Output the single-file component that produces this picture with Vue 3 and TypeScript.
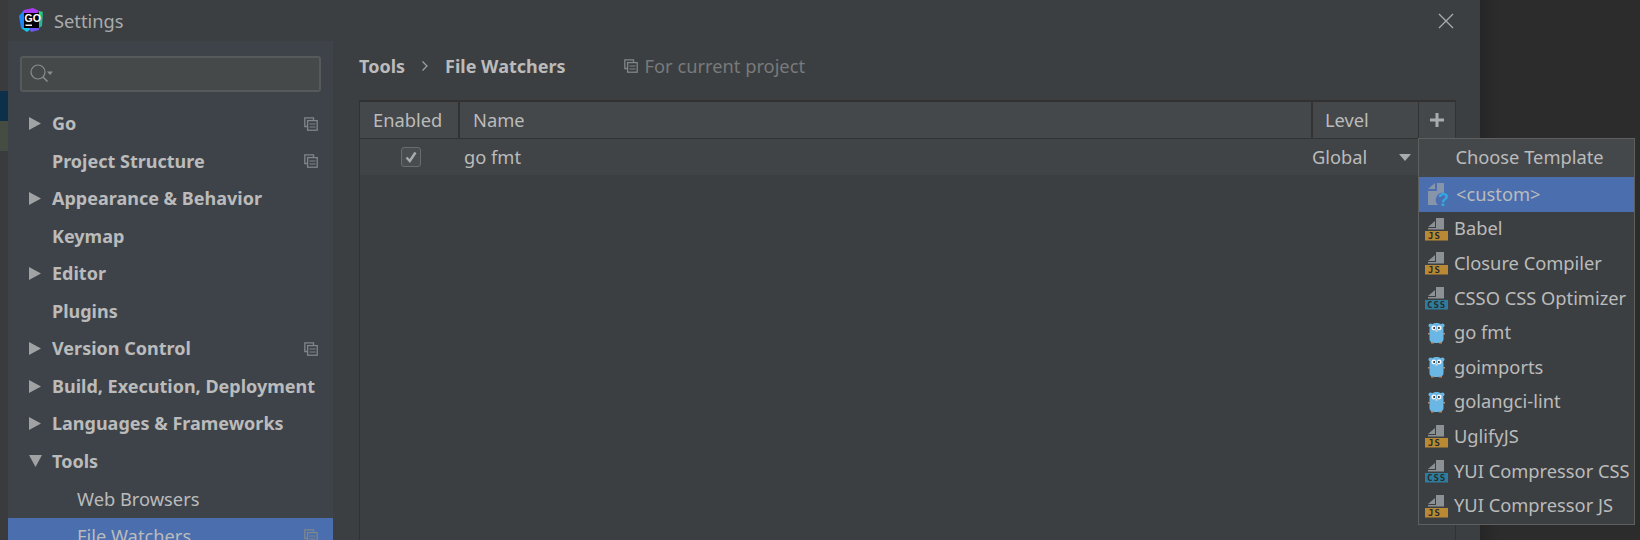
<template>
  <div class="screen">
    <div class="left-strip">
      <div class="strip-blue"></div>
      <div class="strip-olive"></div>
    </div>

    <div class="window">
      <div class="titlebar">
        <svg class="go-logo" width="24" height="24" viewBox="0 0 24 24">
          <polygon points="5,2 14,0 20,3 15,8 5,8" fill="#a63df0" />
          <polygon points="5,2 0,8 2,20 5,20 5,6" fill="#1f86f2" />
          <polygon points="20,3 24,4 20,14" fill="#27d07a" />
          <polygon points="20,12 24,5 23,18 20,20" fill="#27b5a0" />
          <polygon points="2,20 8,24 13,20" fill="#18c5e8" />
          <polygon points="10,20 20,20 20,22 12,24" fill="#6a58f0" />
          <rect x="5" y="5" width="15" height="15" fill="#000" />
          <rect x="6.5" y="16.5" width="6.5" height="1.5" fill="#eee" />
          <text x="5.6" y="14" class="go-logo-text">GO</text>
        </svg>
        <span class="title">Settings</span>
        <svg class="close" width="16" height="16" viewBox="0 0 16 16">
          <path d="M1 1 L15 15 M15 1 L1 15" stroke="#a9abac" stroke-width="1.3" fill="none" />
        </svg>
      </div>

      <div class="body">
        <aside class="sidebar">
          <div class="search">
            <svg width="24" height="22" viewBox="0 0 24 22">
              <circle cx="8" cy="9" r="7" fill="none" stroke="#8a8d8e" stroke-width="1.2" />
              <path d="M13 14 L17.5 18.5" stroke="#8a8d8e" stroke-width="1.6" />
              <polygon points="17,8.5 23,8.5 20,12" fill="#8a8d8e" />
            </svg>
          </div>
          <ul class="tree">
            <li v-for="item in tree" :key="item.label" :class="['tree-row', { selected: item.selected, child: item.child }]">
              <span class="arrow">
                <svg v-if="item.arrow === 'right'" width="12" height="13" viewBox="0 0 12 13"><polygon points="0,0 12,6.5 0,13" fill="#a0a2a3" /></svg>
                <svg v-else-if="item.arrow === 'down'" width="13" height="12" viewBox="0 0 13 12"><polygon points="0,0 13,0 6.5,12" fill="#a0a2a3" /></svg>
              </span>
              <span :class="['tree-label', { bold: !item.child }]">{{ item.label }}</span>
              <svg v-if="item.copy" class="copy-icon" width="14" height="14" viewBox="0 0 14 14">
                <path d="M3.5 9.5H.8V.8H9.5V3.5" fill="none" stroke="#7f8689" stroke-width="1.3" />
                <rect x="3.6" y="3.6" width="9.6" height="9.6" fill="none" stroke="#7f8689" stroke-width="1.3" />
                <path d="M5.5 7h6M5.5 10h6" stroke="#7f8689" stroke-width="1.2" />
              </svg>
            </li>
          </ul>
        </aside>

        <main class="main">
          <div class="crumbs">
            <span class="crumb">Tools</span>
            <svg class="crumb-sep" width="8" height="12" viewBox="0 0 8 12"><path d="M1.5 1.5 L6 6 L1.5 10.5" fill="none" stroke="#a0a2a3" stroke-width="1.2" /></svg>
            <span class="crumb">File Watchers</span>
            <svg class="project-icon" width="14" height="14" viewBox="0 0 14 14">
              <path d="M3.5 9.5H.8V.8H9.5V3.5" fill="none" stroke="#7f8689" stroke-width="1.3" />
              <rect x="3.6" y="3.6" width="9.6" height="9.6" fill="none" stroke="#7f8689" stroke-width="1.3" />
              <path d="M5.5 7h6M5.5 10h6" stroke="#7f8689" stroke-width="1.2" />
            </svg>
            <span class="project-text">For current project</span>
          </div>

          <div class="table">
            <div class="thead">
              <div class="th th-enabled">Enabled</div>
              <div class="th th-name">Name</div>
              <div class="th th-level">Level</div>
              <div class="th th-add">
                <svg width="16" height="16" viewBox="0 0 16 16"><path d="M8 1V15M1 8H15" stroke="#a9abac" stroke-width="3" /></svg>
              </div>
            </div>
            <div class="tr">
              <div class="td-check">
                <span class="checkbox">
                  <svg width="14" height="14" viewBox="0 0 14 14"><path d="M2.5 7.5 L5.8 11 L11.5 2.5" fill="none" stroke="#a8aaab" stroke-width="2.5" /></svg>
                </span>
              </div>
              <div class="td-name">go fmt</div>
              <div class="td-level">Global</div>
              <svg class="level-arrow" width="12" height="7" viewBox="0 0 12 7"><polygon points="0,0 12,0 6,7" fill="#a9abac" /></svg>
            </div>
          </div>
        </main>
      </div>
    </div>

    <div class="outside"></div>

    <div class="popup">
      <div class="popup-title">Choose Template</div>
      <div class="popup-row popup-custom">
        <svg class="custom-icon" width="22" height="28" viewBox="0 0 22 28">
          <path d="M0 9 L7 3 V9 Z" fill="#8795ab" />
          <path d="M9 3 H16 V13 A7 7 0 0 0 10 25 H0 V11 H9 Z" fill="#8795ab" />
          <text x="10" y="26" class="question">?</text>
        </svg>
        <span>&lt;custom&gt;</span>
      </div>
      <div v-for="t in templates" :key="t.label" class="popup-row">
        <svg v-if="t.icon === 'go'" class="row-icon" width="24" height="24" viewBox="0 0 24 24">
          <circle cx="5.5" cy="4.5" r="2" fill="#6ab7e6" />
          <circle cx="17.5" cy="4.5" r="2" fill="#6ab7e6" />
          <path d="M4.5 9 C4.5 4 7.5 2 11.5 2 C15.5 2 18.5 4 18.5 9 V18 C18.5 21 16 22 11.5 22 C7 22 4.5 21 4.5 18 Z" fill="#6ab7e6" />
          <rect x="3" y="12" width="2" height="1.5" fill="#b98a6a" />
          <rect x="18" y="12" width="2" height="1.5" fill="#b98a6a" />
          <rect x="6" y="21" width="3" height="1.5" fill="#b98a6a" />
          <rect x="14" y="21" width="3" height="1.5" fill="#b98a6a" />
          <circle cx="8.8" cy="7" r="2.4" fill="#f4f6f7" />
          <circle cx="14.2" cy="7" r="2.4" fill="#f4f6f7" />
          <circle cx="9.1" cy="7" r="1" fill="#222" />
          <circle cx="13.9" cy="7" r="1" fill="#222" />
          <rect x="10.5" y="9" width="2" height="1.6" fill="#e8d8c0" />
        </svg>
        <svg v-else class="row-icon" width="24" height="24" viewBox="0 0 24 24">
          <path d="M3 10 L10 4 V10 Z" fill="#8b9194" />
          <path d="M11 1 H19 V12.5 H3 V11 H11 Z" fill="#8b9194" />
          <rect x="0" y="14" width="23" height="9.5" :fill="t.icon === 'js' ? '#b98a33' : '#2e7d9e'" />
          <text :x="t.icon === 'js' ? 3 : 2" y="22" class="badge">{{ t.icon.toUpperCase() }}</text>
        </svg>
        <span>{{ t.label }}</span>
      </div>
    </div>
  </div>
</template>

<script setup lang="ts">
type TreeItem = {
  label: string;
  arrow?: 'right' | 'down';
  copy?: boolean;
  child?: boolean;
  selected?: boolean;
};
type Template = { label: string; icon: 'js' | 'css' | 'go' };

const tree: TreeItem[] = [
  { label: 'Go', arrow: 'right', copy: true },
  { label: 'Project Structure', copy: true },
  { label: 'Appearance & Behavior', arrow: 'right' },
  { label: 'Keymap' },
  { label: 'Editor', arrow: 'right' },
  { label: 'Plugins' },
  { label: 'Version Control', arrow: 'right', copy: true },
  { label: 'Build, Execution, Deployment', arrow: 'right' },
  { label: 'Languages & Frameworks', arrow: 'right' },
  { label: 'Tools', arrow: 'down' },
  { label: 'Web Browsers', child: true },
  { label: 'File Watchers', child: true, selected: true, copy: true }
];

const templates: Template[] = [
  { label: 'Babel', icon: 'js' },
  { label: 'Closure Compiler', icon: 'js' },
  { label: 'CSSO CSS Optimizer', icon: 'css' },
  { label: 'go fmt', icon: 'go' },
  { label: 'goimports', icon: 'go' },
  { label: 'golangci-lint', icon: 'go' },
  { label: 'UglifyJS', icon: 'js' },
  { label: 'YUI Compressor CSS', icon: 'css' },
  { label: 'YUI Compressor JS', icon: 'js' }
];
</script>

<style>
html, body {
  margin: 0;
  background: #2b2b2b;
}
</style>

<style scoped>
.screen {
  position: relative;
  display: flex;
  width: 1640px;
  height: 540px;
  overflow: hidden;
  font-family: "Noto Sans", sans-serif;
  font-size: 18.3px;
  color: #bbbbbb;
  background: #2b2b2b;
}

.left-strip {
  width: 8px;
  flex: none;
  background: #393b3c;
  padding-top: 91px;
  box-sizing: border-box;
}
.strip-blue {
  height: 30px;
  background: #0d2f4a;
}
.strip-olive {
  height: 30px;
  background: #454c42;
}

.window {
  width: 1472px;
  flex: none;
  display: flex;
  flex-direction: column;
  background: #3c3f41;
}
.outside {
  flex: 1;
  background: linear-gradient(to right, #262626, #2c2c2c 20px);
}

.titlebar {
  height: 41px;
  flex: none;
  display: flex;
  align-items: center;
  padding-left: 11px;
  padding-right: 26px;
  box-sizing: border-box;
}
.go-logo {
  margin-top: -1px;
}
.go-logo-text {
  font-family: "Liberation Sans", sans-serif;
  font-size: 10.5px;
  font-weight: 700;
  fill: #fff;
}
.title {
  margin-left: 11px;
  color: #a9abac;
}
.close {
  margin-left: auto;
}

.body {
  flex: 1;
  display: flex;
  min-height: 0;
}

.sidebar {
  width: 325px;
  flex: none;
  background: #3e434a;
  padding-top: 15px;
  box-sizing: border-box;
}
.search {
  height: 36px;
  margin: 0 12px;
  width: 301px;
  box-sizing: border-box;
  border: 2px solid #565a5b;
  border-radius: 3px;
  background: #45494a;
  display: flex;
  align-items: center;
  padding-left: 8px;
}
.tree {
  list-style: none;
  margin: 13px 0 0;
  padding: 0;
}
.tree-row {
  height: 37.5px;
  display: flex;
  align-items: center;
  white-space: nowrap;
}
.tree-row.selected {
  background: #4b6eaf;
}
.arrow {
  width: 21px;
  margin-left: 21px;
  margin-right: 2px;
  display: flex;
  flex: none;
}
.tree-row.child .arrow {
  width: 46px;
}
.tree-label {
  padding-bottom: 1px;
}
.tree-label.bold {
  font-weight: 700;
  font-size: 18px;
}
.copy-icon {
  margin-left: auto;
  margin-right: 15px;
  flex: none;
}

.main {
  flex: 1;
  display: flex;
  flex-direction: column;
  padding: 0 24px 0 26px;
  min-width: 0;
}
.crumbs {
  height: 50px;
  margin-bottom: 9px;
  flex: none;
  display: flex;
  align-items: center;
  white-space: nowrap;
}
.crumb {
  font-weight: 700;
  font-size: 18px;
}
.crumb-sep {
  margin: 0 16px;
}
.project-icon {
  margin-left: 58px;
}
.project-text {
  margin-left: 7px;
  padding-bottom: 2px;
  color: #787a7c;
}

.table {
  flex: 1;
  border: 1px solid #323232;
  border-bottom: none;
  border-width: 2px 1px 0;
}
.thead {
  height: 36px;
  display: flex;
  background: #45484a;
  border-bottom: 1px solid #323232;
  box-sizing: content-box;
}
.th {
  display: flex;
  align-items: center;
  white-space: nowrap;
  box-sizing: border-box;
  padding-bottom: 2px;
}
.th-enabled {
  width: 98px;
  padding-left: 13px;
}
.th-name {
  flex: 1;
  padding-left: 15px;
  box-shadow: inset 2px 0 0 #323232;
}
.th-level {
  width: 107px;
  padding-left: 14px;
  box-shadow: inset 2px 0 0 #323232;
}
.th-add {
  width: 37px;
  justify-content: center;
  padding-left: 1px;
  padding-bottom: 0;
  box-shadow: inset 1px 0 0 #323232;
}
.tr {
  height: 36px;
  display: flex;
  align-items: center;
  background: #414446;
  white-space: nowrap;
}
.td-check {
  width: 104px;
  display: flex;
  justify-content: center;
  padding-right: 3px;
  box-sizing: border-box;
}
.checkbox {
  width: 20px;
  height: 20px;
  box-sizing: border-box;
  border: 1px solid #6a6d6f;
  border-radius: 3px;
  background: #4a4d4f;
  display: flex;
  align-items: center;
  justify-content: center;
}
.td-name {
  flex: 1;
  padding-bottom: 2px;
}
.td-level {
  width: 87px;
  padding-bottom: 2px;
}
.level-arrow {
  margin-right: 44px;
}

.popup {
  position: absolute;
  left: 1418px;
  top: 138px;
  width: 217px;
  height: 387px;
  box-sizing: border-box;
  border: 1px solid #5e6060;
  background: #3c3f41;
  white-space: nowrap;
}
.popup-title {
  height: 38px;
  display: flex;
  align-items: center;
  justify-content: center;
  background: #45484b;
  box-sizing: border-box;
  padding-left: 6px;
  padding-bottom: 3px;
}
.popup-row {
  height: 34.6px;
  display: flex;
  align-items: center;
  gap: 5px;
  padding-left: 6px;
}
.popup-row span {
  padding-bottom: 2px;
}
.popup-custom {
  background: #4b6eaf;
  padding-left: 9px;
  gap: 6px;
}
.row-icon,
.custom-icon {
  flex: none;
}
.badge {
  font-family: "DejaVu Sans Mono", monospace;
  font-size: 9px;
  font-weight: 700;
  letter-spacing: 1px;
  fill: #2b2b2b;
}
.question {
  font-family: "Liberation Sans", sans-serif;
  font-size: 18px;
  font-weight: 700;
  fill: #35a7e0;
}
</style>
